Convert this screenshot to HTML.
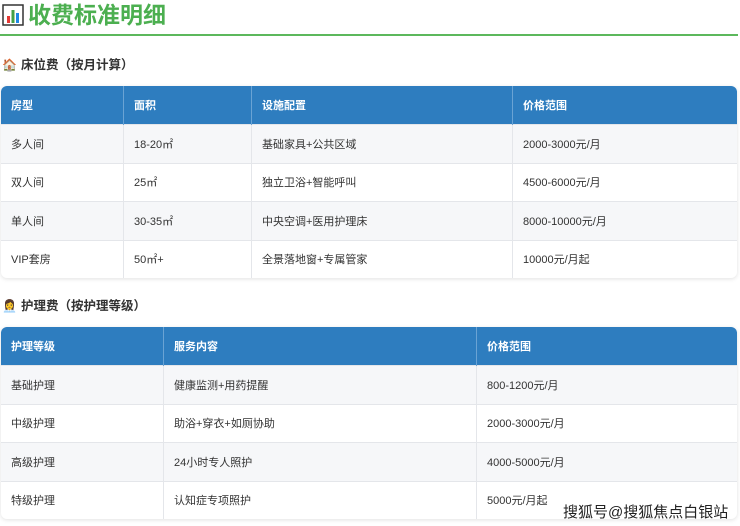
<!DOCTYPE html>
<html><head><meta charset="utf-8"><style>
body{margin:0;background:#fff;font-family:"Liberation Sans","Noto Sans CJK SC",sans-serif;width:740px;height:526px;overflow:hidden;position:relative;color:#333}
.title{position:absolute;left:2px;top:0px;font-size:23px;font-weight:bold;color:#4caf50;height:30px;line-height:30px}
.line{position:absolute;left:0;top:34px;width:738px;height:2px;background:#5cb85c}
.h{position:absolute;left:2px;font-size:12.5px;font-weight:bold;color:#333}
table{position:absolute;left:1px;width:736px;border-collapse:collapse;font-size:11px;border-radius:6px;overflow:hidden;box-shadow:0 1px 4px rgba(0,0,0,.12)}
th{background:#2e7dbf;color:#fff;text-align:left;font-weight:bold;padding:0 0 0 10px;height:38px;border-right:1px solid #6aa3d4}
td{padding:0 0 0 10px;height:37.5px;border-right:1px solid #e4e6ea;border-top:1px solid #e4e6ea}
th:last-child,td:last-child{border-right:none}
tr.g td{background:#f6f7f9}
.ico{display:inline-block;vertical-align:-3px;margin-right:4px}
</style></head><body>
<div class="title"><svg class="ico" width="22" height="22" viewBox="0 0 22 22"><rect x="1" y="1" width="20" height="20" fill="#fff" stroke="#333" stroke-width="1.5"/><rect x="5" y="12" width="3" height="7" fill="#e53935"/><rect x="9.5" y="6" width="3" height="13" fill="#43a047"/><rect x="14" y="9" width="3" height="10" fill="#1e88e5"/></svg>收费标准明细</div>
<div class="line"></div>
<div class="h" style="top:54px"><span class="ico" style="font-size:12px;vertical-align:0">🏠</span>床位费（按月计算）</div>
<table style="top:86px">
<tr><th style="width:112px">房型</th><th style="width:117px">面积</th><th style="width:250px">设施配置</th><th>价格范围</th></tr>
<tr class="g"><td>多人间</td><td>18-20㎡</td><td>基础家具+公共区域</td><td>2000-3000元/月</td></tr>
<tr><td>双人间</td><td>25㎡</td><td>独立卫浴+智能呼叫</td><td>4500-6000元/月</td></tr>
<tr class="g"><td>单人间</td><td>30-35㎡</td><td>中央空调+医用护理床</td><td>8000-10000元/月</td></tr>
<tr><td>VIP套房</td><td>50㎡+</td><td>全景落地窗+专属管家</td><td>10000元/月起</td></tr>
</table>
<div class="h" style="top:295px"><span class="ico" style="font-size:12px;vertical-align:0">👩‍💼</span>护理费（按护理等级）</div>
<table style="top:327px">
<tr><th style="width:152px">护理等级</th><th style="width:302px">服务内容</th><th>价格范围</th></tr>
<tr class="g"><td>基础护理</td><td>健康监测+用药提醒</td><td>800-1200元/月</td></tr>
<tr><td>中级护理</td><td>助浴+穿衣+如厕协助</td><td>2000-3000元/月</td></tr>
<tr class="g"><td>高级护理</td><td>24小时专人照护</td><td>4000-5000元/月</td></tr>
<tr><td>特级护理</td><td>认知症专项照护</td><td>5000元/月起</td></tr>
</table>
<div style="position:absolute;left:563px;top:501px;font-size:15px;color:#222;text-shadow:0 0 2px #fff,0 0 2px #fff,0 0 1px #fff">搜狐号@搜狐焦点白银站</div>
</body></html>
